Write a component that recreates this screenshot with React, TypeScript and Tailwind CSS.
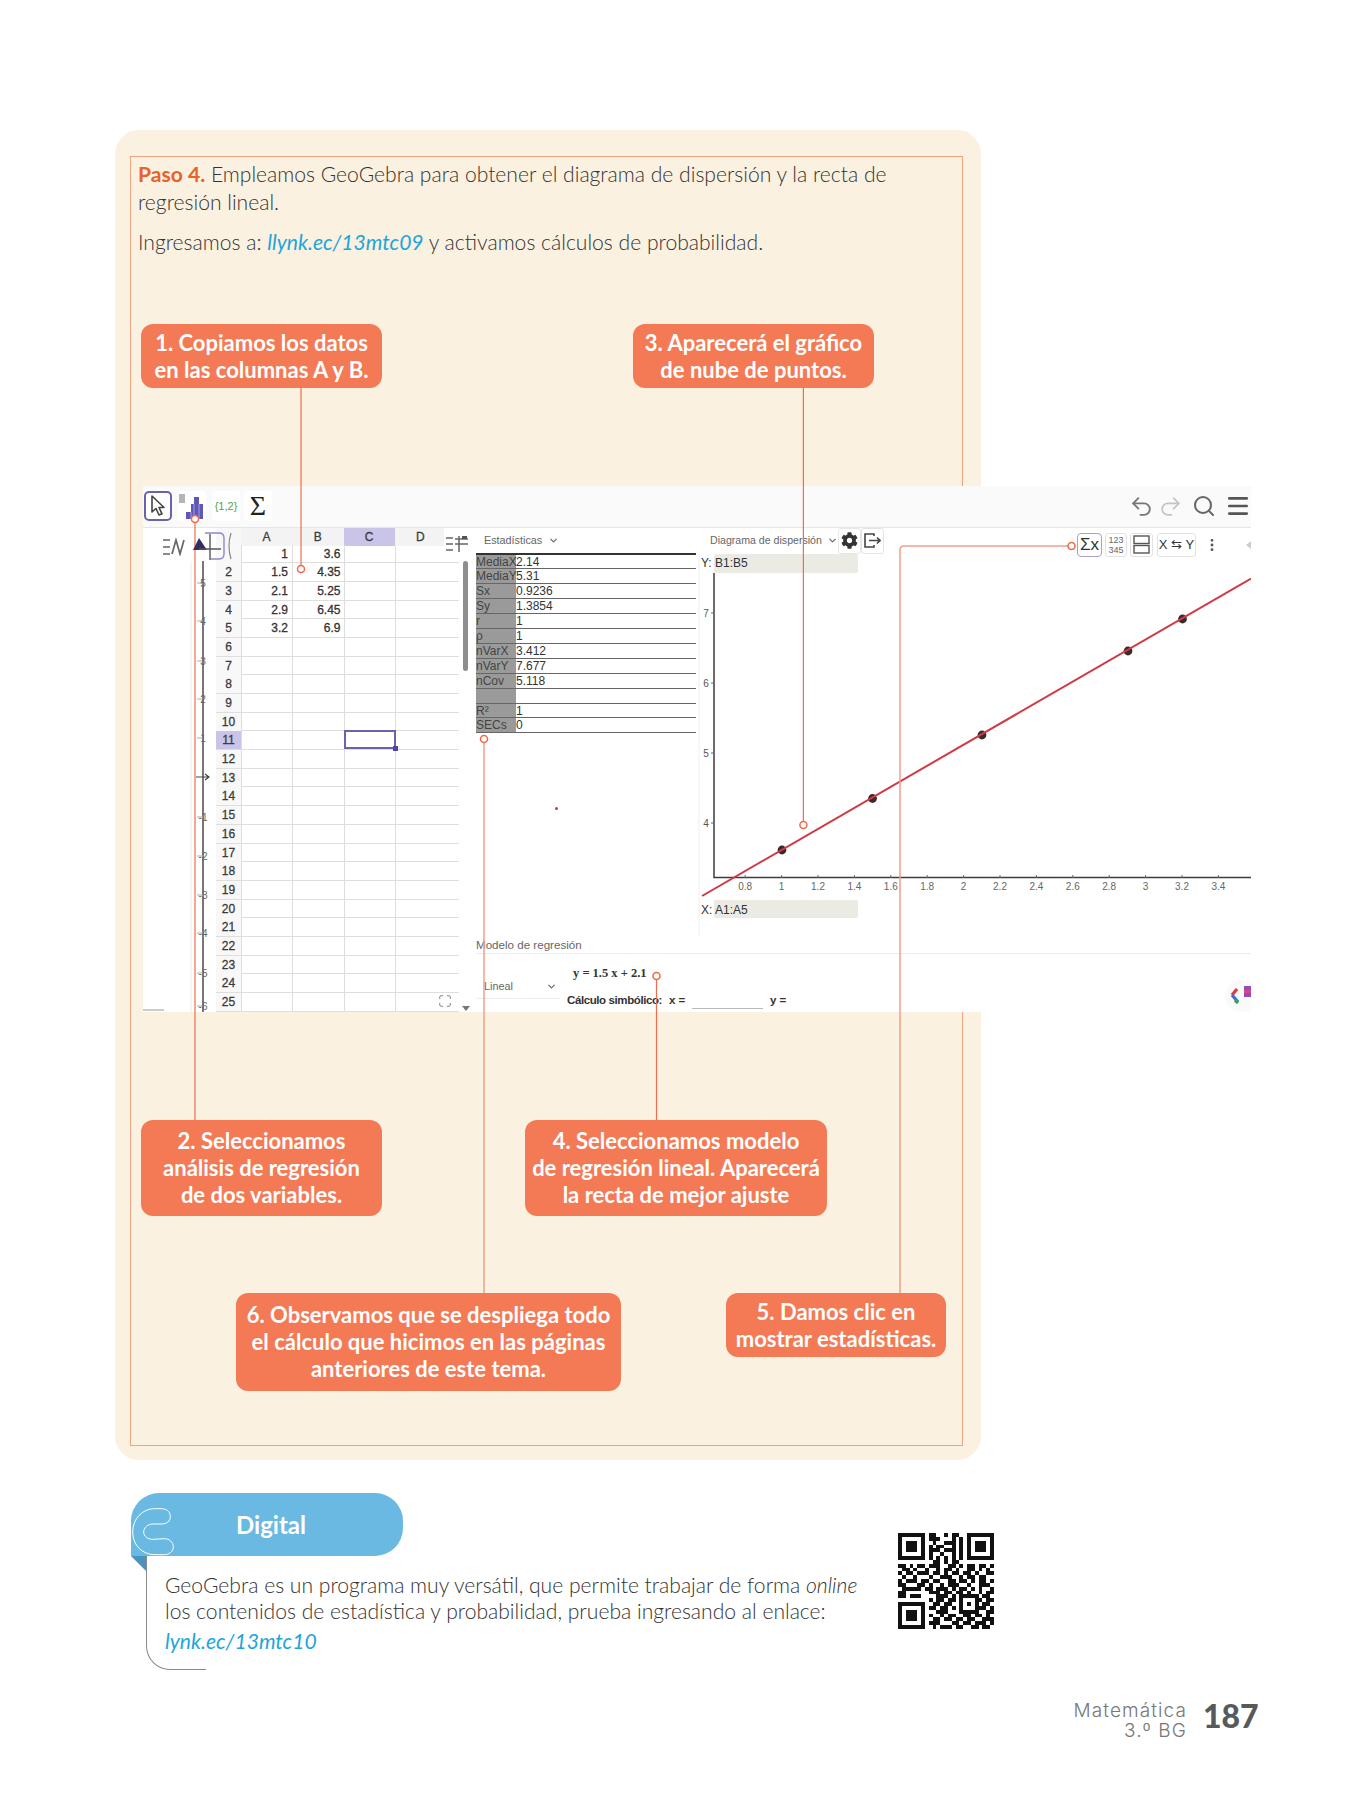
import { ChevronDown, EllipsisVertical, Maximize, Menu, Redo2, Search, Undo2 } from 'lucide-react'
import { FaCog } from 'react-icons/fa'

const rowsData: Record<number, [string, string]> = {
  1: ['1', '3.6'],
  2: ['1.5', '4.35'],
  3: ['2.1', '5.25'],
  4: ['2.9', '6.45'],
  5: ['3.2', '6.9'],
}

const stats = [
  ['MediaX', '2.14'],
  ['MediaY', '5.31'],
  ['Sx', '0.9236'],
  ['Sy', '1.3854'],
  ['r', '1'],
  ['ρ', '1'],
  ['nVarX', '3.412'],
  ['nVarY', '7.677'],
  ['nCov', '5.118'],
  ['', ''],
  ['R²', '1'],
  ['SECs', '0'],
]

const qr = [
  '1111111' + '01100101100' + '1111111',
  '1000001' + '01110001010' + '1000001',
  '1011101' + '00100111010' + '1011101',
  '1011101' + '01011001010' + '1011101',
  '1011101' + '01110111010' + '1011101',
  '1000001' + '01001001010' + '1000001',
  '1111111' + '01010101010' + '1111111',
  '00000000' + '011010110' + '00000000',
  '1101011011100110101101101',
  '0110100100101101001101010',
  '1011011101101011011010011',
  '0100100010011100101101100',
  '1011101101100110110101101',
  '1100011010010111001001110',
  '0111110110111010110101001',
  '1100000011101101101001011',
  '11011100' + '00111010' + '11111' + '0110',
  '00000000' + '10110110' + '10001' + '1011',
  '11111110' + '01101100' + '10101' + '0110',
  '10000010' + '11011010' + '10001' + '1101',
  '10111010' + '00111000' + '11111' + '0011',
  '10111010' + '10010110' + '01101' + '1010',
  '10111010' + '01101101' + '10110' + '0111',
  '10000010' + '11100011' + '01101' + '1101',
  '11111110' + '01011101' + '10011' + '0110',
]

const xTicks = ['0.8', '1', '1.2', '1.4', '1.6', '1.8', '2', '2.2', '2.4', '2.6', '2.8', '3', '3.2', '3.4']
const points = [
  [782, 849],
  [872.5, 797.5],
  [982, 734],
  [1128, 650],
  [1182.5, 618],
]

const Callout = ({ className, children }: { className: string; children: React.ReactNode }) => (
  <div
    className={`flex items-center justify-center rounded-[12px] bg-[#f47a56] text-center text-[22px] leading-[27px] font-bold whitespace-nowrap text-white ${className}`}
  >
    <p>{children}</p>
  </div>
)

const ToolBtn = ({ className, children }: { className?: string; children: React.ReactNode }) => (
  <div className={`flex h-[30px] items-center justify-center rounded-[4px] bg-white ${className ?? ''}`}>
    {children}
  </div>
)

const Toolbar = () => (
  <div className="flex h-[42px] items-center justify-between border-b border-[#e6e6e6] bg-[#fafafa] pl-px">
    <div className="flex items-center">
      <ToolBtn className="w-[28px] rounded-[5px] border-2 border-[#6a62ad]">
        <svg width="18" height="22" viewBox="0 0 18 22" fill="#fff" stroke="#444" strokeWidth="1.6" strokeLinejoin="round">
          <path d="M3 1 V17 L7 13.5 L10 20 L13 18.8 L10 12.5 H15 Z" />
        </svg>
      </ToolBtn>
      <ToolBtn className="ml-[6px] w-[28px]">
        <svg width="26" height="28" viewBox="0 0 26 28">
          <rect x="0" y="2" width="6" height="9" fill="#b5b5b5" />
          <path d="M7 27 V20 H12 V12 H15 V5 H20 V12 H24 V27 Z" fill="#5f57b8" />
          <path d="M12 20 V27 M15 12 V27 M20 12 V27" stroke="#a7a1de" strokeWidth="1" />
        </svg>
      </ToolBtn>
      <ToolBtn className="ml-[6px] w-[28px]">
        <span className="font-['Liberation_Sans',sans-serif] text-[11px] text-[#4aa84f]">{'{1,2}'}</span>
      </ToolBtn>
      <ToolBtn className="ml-[4px] w-[28px]">
        <span className="font-['Liberation_Serif',serif] text-[28px] leading-none text-[#222]">Σ</span>
      </ToolBtn>
    </div>
    <div className="flex items-center text-[#777]">
      <Undo2 size={25} strokeWidth={1.8} />
      <Redo2 size={25} strokeWidth={1.6} className="ml-[4px] text-[#c4c4c4]" />
      <Search size={24} strokeWidth={2} className="ml-[9px] text-[#666]" />
      <Menu size={26} strokeWidth={2.5} className="ml-[9px] text-[#555]" />
    </div>
  </div>
)

const MiniGraph = () => (
  <div className="relative z-10 w-[73px] shrink-0">
    <svg width="73" height="484" viewBox="143 527 73 484" className="block">
      <path d="M191 560 V1011" stroke="#ececec" strokeWidth="1" />
      <path d="M203 560 V1011" stroke="#777" strokeWidth="2" />
      {[
        ['5', 582],
        ['4', 620],
        ['3', 660],
        ['2', 698],
        ['1', 737],
        ['-1', 816],
        ['-2', 855],
        ['-3', 894],
        ['-4', 932],
        ['-5', 972],
        ['-6', 1005],
      ].map(([label, y]) => (
        <g key={`${label}`}>
          <path d={`M197 ${y} H203`} stroke="#aaa" />
          <text x="203" y={Number(y) + 4} textAnchor="middle" fontSize="10" fill="#666" fontFamily="Liberation Sans">
            {label}
          </text>
        </g>
      ))}
      <path d="M196 776 H208 M205 773 L209 776 L205 779" stroke="#444" strokeWidth="1.2" fill="none" />
      <path d="M143 1009 H164" stroke="#ccc" strokeWidth="2" />
    </svg>
    <div className="absolute top-0 left-[14px] flex h-[38px] w-[34px] items-center justify-center rounded-[4px] bg-white">
      <svg width="25" height="18" viewBox="0 0 25 18" fill="none" stroke="#666" strokeWidth="1.7">
        <path d="M1 2 H8 M1 9 H8 M1 16 H8" />
        <path d="M10 16 L14 2 L18 16 L22 2" />
      </svg>
    </div>
    <div className="absolute top-[2px] left-[50px] flex h-[32px] items-center">
      <svg width="42" height="32" viewBox="0 0 42 32" fill="none">
        <path d="M6 8 L14 20 H0 Z" fill="#332e5c" />
        <path d="M17 4 V30 M6 19 H28" stroke="#555" strokeWidth="1.4" />
        <path d="M12 3 H26 Q31 3 31 8 V24 Q31 29 26 29 H18" stroke="#8d86cc" strokeWidth="1.4" />
        <path d="M38 3 Q34 16 38 29" stroke="#888" strokeWidth="1.2" />
      </svg>
    </div>
  </div>
)

const Sheet = () => (
  <div className="relative w-[260px] shrink-0 overflow-hidden font-['Liberation_Sans',sans-serif] text-[12px] text-[#333] [-webkit-text-stroke:0.3px_#333]">
    <div className="grid h-[17px] grid-cols-[25px_51px_51.5px_51px_51.5px] text-center text-[#444]">
      <div className="bg-[#f7f7f7]" />
      <div className="flex items-center justify-center bg-[#f3f3f3]">A</div>
      <div className="flex items-center justify-center bg-[#f3f3f3]">B</div>
      <div className="flex items-center justify-center bg-[#c9c4e8]">C</div>
      <div className="flex items-center justify-center bg-[#f3f3f3]">D</div>
    </div>
    {Array.from({ length: 25 }, (_, i) => i + 1).map((n) => (
      <div key={n} className="grid h-[18.7px] w-[243px] grid-cols-[25px_51px_51.5px_51px_1fr] border-b border-[#dedede]">
        <div className={`flex items-center justify-center text-[#444] ${n === 11 ? 'bg-[#c9c4e8]' : 'bg-[#f8f8f8]'}`}>
          {n === 1 ? '' : n}
        </div>
        <div className="flex items-center justify-end border-l border-[#dedede] pr-[4px]">{rowsData[n]?.[0]}</div>
        <div className="flex items-center justify-end border-l border-[#dedede] pr-[3px]">{rowsData[n]?.[1]}</div>
        <div className="relative border-l border-[#dedede]">
          {n === 11 && (
            <div className="absolute -top-px -left-px h-[19px] w-[52px] border-2 border-[#6a62ad]">
              <div className="absolute -right-[4px] -bottom-[4px] h-[5px] w-[5px] bg-[#4f46a8]" />
            </div>
          )}
        </div>
        <div className="border-l border-[#dedede]" />
      </div>
    ))}
    <div className="absolute top-0 left-[228px] flex h-[33px] w-[25px] items-center justify-center bg-white">
      <svg width="22" height="18" viewBox="0 0 22 18" fill="none" stroke="#666" strokeWidth="1.5">
        <path d="M0 3 H7 M0 9 H7 M0 15 H7 M9 4 H22 M9 9 H22 M13 1 V17" />
        <rect x="16" y="1" width="5" height="3" fill="#555" stroke="none" />
      </svg>
    </div>
    <div className="absolute top-[33px] left-[247px] h-[110px] w-[5px] rounded-full bg-[#8e8e8e]" />
    <Maximize size={14} className="absolute top-[466px] left-[222px] text-[#777]" strokeWidth={1.5} />
    <div className="absolute top-[478px] left-[246px] h-0 w-0 border-x-[4px] border-t-[5px] border-x-transparent border-t-[#777]" />
  </div>
)

const StatsPanel = () => (
  <div className="relative w-[220px] shrink-0 font-['Liberation_Sans',sans-serif]">
    <div className="flex h-[25px] items-center pl-[8px] text-[10.8px] text-[#666]">
      Estadísticas
      <ChevronDown size={11} className="ml-[6px]" strokeWidth={2.5} />
    </div>
    <div className="border-t-2 border-[#333] text-[12px] leading-[14px]">
      {stats.map(([label, value], i) => (
        <div key={`${label}-${i}`} className="flex h-[14.92px] border-b border-[#666]">
          <div className="w-[40px] bg-[#9a9a9a] text-[#444]">{label}</div>
          <div className="text-[#333]">{value}</div>
        </div>
      ))}
    </div>
    <div className="absolute top-[279px] left-[79px] h-[3px] w-[3px] rounded-full bg-[#d8343f]" />
  </div>
)

const ScatterPanel = () => (
  <div className="relative w-[555px] shrink-0 font-['Liberation_Sans',sans-serif]">
    <div className="flex h-[26px] items-center pl-[14px] text-[10.6px] text-[#666]">
      Diagrama de dispersión
      <ChevronDown size={11} className="ml-[5px]" strokeWidth={2.5} />
      <div className="flex h-[26px] w-[23px] items-center justify-center rounded-[3px] border border-[#e8e8e8]">
        <FaCog size={17} className="text-[#333]" />
      </div>
      <div className="flex h-[26px] w-[23px] items-center justify-center rounded-[3px] border border-[#e4e4e4]">
        <svg width="17" height="15" viewBox="0 0 17 15" fill="none" stroke="#444" strokeWidth="1.6">
          <path d="M10 3 V1 H1 V14 H10 V12 M5 7.5 H16 M13 4.5 L16 7.5 L13 10.5" />
        </svg>
      </div>
    </div>
    <svg width="555" height="382" viewBox="696 553 555 382" className="block">
      <path d="M699 553 V935" stroke="#eeeeee" />
      <path d="M714 572 V876.5 H1251" stroke="#3d3d3d" strokeWidth="1.5" fill="none" />
      {[
        ['7', 612],
        ['6', 682],
        ['5', 752],
        ['4', 822],
      ].map(([label, y]) => (
        <g key={`${label}`}>
          <path d={`M711 ${y} H714`} stroke="#666" />
          <text x="706" y={Number(y) + 4} textAnchor="middle" fontSize="10" fill="#555">
            {label}
          </text>
        </g>
      ))}
      {xTicks.map((t, i) => {
        const x = 745.2 + i * 36.4
        return (
          <g key={t}>
            <path d={`M${x} 874 V877`} stroke="#666" />
            <text x={x} y="889" textAnchor="middle" fontSize="10" fill="#666">
              {t}
            </text>
          </g>
        )
      })}
      {points.map(([x, y]) => (
        <circle key={x} cx={x} cy={y} r="4.4" fill="#3a2a2c" />
      ))}
      <path d="M702 895 L1251 577.5" stroke="#cf3a45" strokeWidth="2" />
    </svg>
    <div className="absolute top-[26px] left-[18px] h-[19px] w-[144px] rounded-[2px] bg-[#ebebe3]" />
    <span className="absolute top-[26px] left-[5px] text-[12px] text-[#333]">Y: B1:B5</span>
    <div className="absolute top-[372px] left-[18px] h-[18px] w-[144px] rounded-[2px] bg-[#ebebe3]" />
    <span className="absolute top-[373px] left-[5px] text-[12px] text-[#333]">X: A1:A5</span>
    <div className="absolute top-px right-0 flex h-[32px] w-[177px] items-center rounded-bl-[3px] bg-white pl-[3px] text-[#333]">
      <div className="flex h-[24px] w-[25px] items-center justify-center rounded-[4px] border border-[#a49fd6] text-[17px] leading-none">
        Σx
      </div>
      <div className="ml-[3px] flex h-[24px] w-[22px] flex-col items-center justify-center rounded-[3px] border border-[#e2e2e2] text-[9px] leading-[10px] text-[#666]">
        <span>123</span>
        <span>345</span>
      </div>
      <div className="ml-[3px] flex h-[24px] w-[23px] items-center justify-center rounded-[3px] border border-[#e2e2e2]">
        <svg width="17" height="19" viewBox="0 0 17 19" fill="none" stroke="#555" strokeWidth="1.4">
          <rect x="1" y="1" width="15" height="7.5" />
          <rect x="1" y="10.5" width="15" height="7.5" />
        </svg>
      </div>
      <div className="ml-[4px] flex h-[24px] w-[39px] items-center justify-center rounded-[3px] border border-[#e2e2e2] text-[13px] whitespace-nowrap">
        X ⇆ Y
      </div>
      <EllipsisVertical size={16} className="ml-[8px] text-[#555]" strokeWidth={2.2} />
      <div className="ml-auto h-0 w-0 border-y-[4px] border-r-[5px] border-y-transparent border-r-[#ccc]" />
    </div>
  </div>
)

const RegressionBar = () => (
  <div className="font-['Liberation_Sans',sans-serif]">
    <div className="flex h-[18px] items-center border-b border-[#ececec] pt-[2px] text-[11.6px] text-[#666]">
      Modelo de regresión
    </div>
    <div className="relative flex h-[58px]">
      <div className="w-[91px] shrink-0">
        <div className="mt-[22px] flex h-[23px] w-[84px] items-center border-b border-[#ececec] pl-[8px] text-[10.8px] text-[#666]">
          Lineal
          <ChevronDown size={11} className="mr-[3px] ml-auto" strokeWidth={2.5} />
        </div>
      </div>
      <div>
        <div className="mt-[11px] ml-[6px] font-['Liberation_Serif',serif] text-[12.5px] leading-[16px] font-bold text-[#333]">
          y = 1.5 x + 2.1
        </div>
        <div className="mt-[10px] flex text-[11.5px] leading-[18px] font-bold text-[#333]">
          <span className="w-[102px] tracking-[-0.4px] whitespace-nowrap">Cálculo simbólico:</span>
          <span className="w-[23px]">x =</span>
          <span className="h-px w-[71px] self-end bg-[#bbb]" />
          <span className="ml-[7px]">y =</span>
        </div>
      </div>
      <div className="absolute top-[26px] right-0 flex h-[32px] w-[26px] items-center overflow-hidden rounded-l-full bg-[#fafafa] pl-[4px]">
        <svg width="22" height="24" viewBox="0 0 22 24" fill="none" strokeWidth="3.2">
          <path d="M8 5 L3 11" stroke="#e23a3f" />
          <path d="M3 11 L9 18" stroke="#3f6fd8" />
          <path d="M9 19 L6 16" stroke="#35a845" />
          <rect x="15" y="2" width="7" height="11" fill="#8a4fc0" stroke="none" />
          <rect x="15" y="6" width="7" height="3" fill="#d9457a" stroke="none" />
        </svg>
      </div>
    </div>
  </div>
)

const GeoGebraShot = () => (
  <div className="mt-[98px] ml-[12px] h-[526px] w-[1108px] overflow-hidden bg-white">
    <Toolbar />
    <div className="flex h-[484px]">
      <MiniGraph />
      <Sheet />
      <div className="w-[775px] shrink-0">
        <div className="flex h-[408px]">
          <StatsPanel />
          <ScatterPanel />
        </div>
        <RegressionBar />
      </div>
    </div>
  </div>
)

const Leaders = () => (
  <svg width="1350" height="1800" viewBox="0 0 1350 1800" fill="none" className="pointer-events-none absolute top-0 left-0">
    <g stroke="#ef6f4d" strokeWidth="1.2">
      <path d="M301 387 V565.5" />
      <path d="M803.4 387 V821.5" />
      <path d="M195 522.5 V1120" />
      <path d="M656.5 979.5 V1120" />
    </g>
    <g stroke="#f2a088" strokeWidth="1.5">
      <path d="M484 742.5 V1293" />
      <path d="M900 1293 V550 Q900 546 904 546 H1068" />
    </g>
    <g stroke="#ef6a45" strokeWidth="1.5" fill="#fff">
      <circle cx="301" cy="569" r="3.5" />
      <circle cx="195" cy="519" r="3.5" />
      <circle cx="803.4" cy="825" r="3.5" />
      <circle cx="656.5" cy="976" r="3.5" />
      <circle cx="484" cy="739" r="3.5" />
      <circle cx="1071.5" cy="546" r="3.5" />
    </g>
  </svg>
)

const DigitalBox = () => (
  <div className="mt-[33px]">
    <div className="relative ml-[131px] flex h-[63px] w-[272px] items-center rounded-t-[28px] rounded-br-[28px] bg-[#6ab9e2] pl-[105px] text-[24px] font-bold text-white">
      Digital
      <svg width="45" height="50" viewBox="60 85 135 150" fill="none" stroke="#fff" strokeWidth="3" className="absolute top-[14px] left-0">
        <path d="M130 90 C95 90 65 120 65 160 C65 200 95 228 130 228 L160 228 C175 228 187 218 187 205 C187 190 175 180 160 180 L125 182 C110 182 98 172 98 160 C98 148 110 136 125 136 L150 136 C168 136 178 128 178 113 C178 98 165 90 150 90 Z" />
      </svg>
      <svg width="16" height="16" viewBox="0 0 16 16" className="absolute top-[63px] left-0">
        <path d="M0 0 H16 V16 Z" fill="#4b93bf" />
      </svg>
      <div className="absolute top-[63px] left-[15px] h-[114px] w-[60px] rounded-bl-[24px] border-b border-l border-[#8a8a8a]" />
    </div>
    <div className="mt-[-23px] ml-[165px] flex items-start">
      <div className="mt-[39px] w-[720px] text-[21.1px] leading-[26px] font-light text-[#333]">
        <p>
          GeoGebra es un programa muy versátil, que permite trabajar de forma <em>online</em>
        </p>
        <p>los contenidos de estadística y probabilidad, prueba ingresando al enlace:</p>
        <p className="mt-[4px] font-normal text-[#1ea5dc] italic">lynk.ec/13mtc10</p>
      </div>
      <svg width="96" height="96" viewBox="0 0 25 25" className="ml-[13px]" shapeRendering="crispEdges">
        {qr.map((row, y) =>
          row.split('').map((c, x) => (c === '1' ? <rect key={`${x}-${y}`} x={x} y={y} width="1" height="1" fill="#111" /> : null)),
        )}
      </svg>
    </div>
  </div>
)

export default function App() {
  return (
    <div className="relative h-[1800px] w-[1350px] overflow-hidden bg-white pt-[130px] font-['Lato',sans-serif]">
      <section className="ml-[115px] h-[1330px] w-[865.5px] rounded-[24px] bg-[#fbf1e0] pt-[26px] pl-[15px]">
        <div className="h-[1290px] w-[833px] border border-[#f0a47f]">
          <div className="px-[7px] pt-[3px] text-[21.1px] leading-[27.5px] font-light text-[#333]">
            <p>
              <strong className="font-bold text-[#e8622a]">Paso 4.</strong> Empleamos GeoGebra para obtener el diagrama
              de dispersión y la recta de regresión lineal.
            </p>
            <p className="mt-[13px]">
              Ingresamos a: <em className="font-normal text-[#1ea5dc]">llynk.ec/13mtc09</em> y activamos cálculos de
              probabilidad.
            </p>
          </div>
          <div className="mt-[68px] ml-[10px] flex">
            <Callout className="h-[64px] w-[241px]">
              1. Copiamos los datos
              <br />
              en las columnas A y B.
            </Callout>
            <Callout className="ml-[251px] h-[64px] w-[241px]">
              3. Aparecerá el gráfico
              <br />
              de nube de puntos.
            </Callout>
          </div>
          <GeoGebraShot />
          <div className="mt-[108px] ml-[10px] flex">
            <Callout className="h-[96px] w-[241px]">
              2. Seleccionamos
              <br />
              análisis de regresión
              <br />
              de dos variables.
            </Callout>
            <Callout className="ml-[143px] h-[96px] w-[302px]">
              4. Seleccionamos modelo
              <br />
              de regresión lineal. Aparecerá
              <br />
              la recta de mejor ajuste
            </Callout>
          </div>
          <div className="mt-[77px] ml-[105px] flex items-start">
            <Callout className="h-[98px] w-[385px]">
              6. Observamos que se despliega todo
              <br />
              el cálculo que hicimos en las páginas
              <br />
              anteriores de este tema.
            </Callout>
            <Callout className="ml-[105px] h-[64px] w-[220px]">
              5. Damos clic en
              <br />
              mostrar estadísticas.
            </Callout>
          </div>
        </div>
      </section>
      <DigitalBox />
      <footer className="absolute top-[1701px] left-[1074px] flex items-start text-[#777]">
        <div className="w-[113px] text-right font-['Inter',sans-serif] text-[19px] leading-[20px] font-light tracking-[1.1px] whitespace-nowrap">
          <p className="flex justify-end">Matemática</p>
          <p>3.º BG</p>
        </div>
        <span className="ml-[16px] text-[32px] leading-[30px] font-black text-[#58595b]">187</span>
      </footer>
      <Leaders />
    </div>
  )
}
